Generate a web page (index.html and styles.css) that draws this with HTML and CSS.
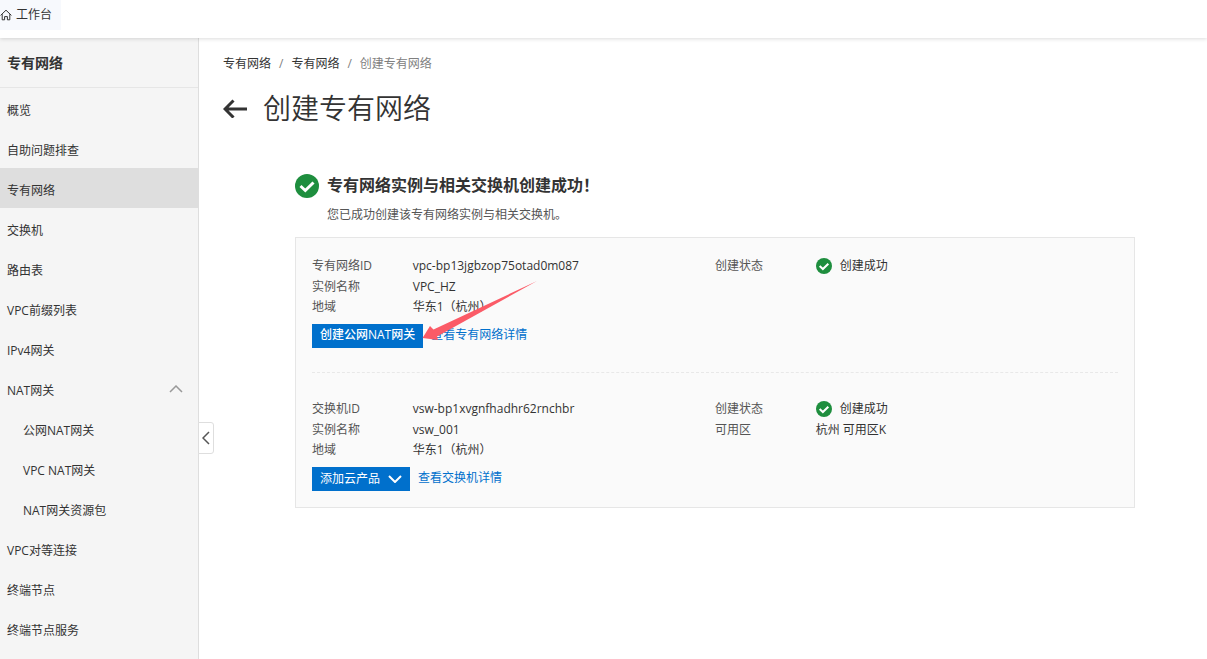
FILE: index.html
```html
<!DOCTYPE html>
<html lang="zh-CN">
<head>
    <meta charset="UTF-8">
    <meta name="viewport" content="width=device-width, initial-scale=1.0">
    <title>创建专有网络</title>
    <link rel="stylesheet" href="styles.css">
</head>
<body>

<header class="topbar">
    <a class="workbench" href="#">
        <svg class="home-icon" viewBox="0 0 12 12" aria-hidden="true">
            <path d="M0.600 6.400 L6 1.200 L11.400 6.400 M2.200 5.200 V10.800 H4.600 V7.600 H7.400 V10.800 H9.800 V5.200"/>
        </svg>
        工作台
    </a>
</header>

<div class="layout">
    <!-- 侧边导航 -->
    <aside class="sidebar">
        <h2 class="sidebar-title">专有网络</h2>
        <nav class="menu">
            <a href="#">概览</a>
            <a href="#">自助问题排查</a>
            <a class="active" href="#">专有网络</a>
            <a href="#">交换机</a>
            <a href="#">路由表</a>
            <a href="#">VPC前缀列表</a>
            <a href="#">IPv4网关</a>
            <a class="parent" href="#">NAT网关
                <svg class="fold-icon" viewBox="0 0 14 8" aria-hidden="true"><path d="M1 7 L7 1 L13 7"/></svg>
            </a>
            <a class="sub" href="#">公网NAT网关</a>
            <a class="sub" href="#">VPC NAT网关</a>
            <a class="sub" href="#">NAT网关资源包</a>
            <a href="#">VPC对等连接</a>
            <a href="#">终端节点</a>
            <a href="#">终端节点服务</a>
        </nav>
        <button type="button" class="collapse-btn" aria-label="收起">
            <svg viewBox="0 0 8 14" aria-hidden="true"><path d="M7 1 L1 7 L7 13"/></svg>
        </button>
    </aside>

    <main class="main">
        <nav class="breadcrumb">
            <a href="#">专有网络</a>
            <span class="slash">/</span>
            <a href="#">专有网络</a>
            <span class="slash">/</span>
            <span class="current">创建专有网络</span>
        </nav>

        <div class="page-head">
            <a class="back" href="#" aria-label="返回">
                <svg viewBox="0 0 24 20" aria-hidden="true"><path d="M24 11 H2 M10.500 2.500 L2 11 L10.500 19.500"/></svg>
            </a>
            <h1>创建专有网络</h1>
        </div>

        <section class="result">
            <div class="message">
                <svg class="ok-icon large" viewBox="0 0 24 24" aria-hidden="true">
                    <circle cx="12" cy="12" r="12"/>
                    <path d="M5.500 12 L10.300 16.500 L18.500 8.500"/>
                </svg>
                <div>
                    <h3>专有网络实例与相关交换机创建成功！</h3>
                    <p>您已成功创建该专有网络实例与相关交换机。</p>
                </div>
            </div>

            <div class="panel">
                <!-- 专有网络 -->
                <div class="instance">
                    <dl>
                        <div class="row">
                            <dt>专有网络ID</dt><dd>vpc-bp13jgbzop75otad0m087</dd>
                            <dt>创建状态</dt>
                            <dd class="status">
                                <svg class="ok-icon" viewBox="0 0 24 24" aria-hidden="true">
                                    <circle cx="12" cy="12" r="12"/>
                                    <path d="M5.500 12 L10.300 16.500 L18.500 8.500"/>
                                </svg>
                                创建成功
                            </dd>
                        </div>
                        <div class="row"><dt>实例名称</dt><dd>VPC_HZ</dd></div>
                        <div class="row"><dt>地域</dt><dd>华东1（杭州）</dd></div>
                    </dl>
                    <div class="actions">
                        <button type="button" class="btn strong">创建公网NAT网关</button>
                        <a href="#">查看专有网络详情</a>
                    </div>
                    <svg class="pointer" viewBox="0 0 116 60" aria-hidden="true">
                        <path d="M0.500 58 L8 46 L11.500 49.500 L115 1 L15 56.500 L16 60 Z"/>
                    </svg>
                </div>

                <!-- 交换机 -->
                <div class="instance">
                    <dl>
                        <div class="row">
                            <dt>交换机ID</dt><dd>vsw-bp1xvgnfhadhr62rnchbr</dd>
                            <dt>创建状态</dt>
                            <dd class="status">
                                <svg class="ok-icon" viewBox="0 0 24 24" aria-hidden="true">
                                    <circle cx="12" cy="12" r="12"/>
                                    <path d="M5.500 12 L10.300 16.500 L18.500 8.500"/>
                                </svg>
                                创建成功
                            </dd>
                        </div>
                        <div class="row"><dt>实例名称</dt><dd>vsw_001</dd><dt>可用区</dt><dd>杭州 可用区K</dd></div>
                        <div class="row"><dt>地域</dt><dd>华东1（杭州）</dd></div>
                    </dl>
                    <div class="actions">
                        <button type="button" class="btn">添加云产品
                            <svg viewBox="0 0 14 8" aria-hidden="true"><path d="M1 1 L7 7 L13 1"/></svg>
                        </button>
                        <a href="#">查看交换机详情</a>
                    </div>
                </div>
            </div>
        </section>
    </main>
</div>

</body>
</html>
```
FILE: styles.css
```css
* {
    box-sizing: border-box;
}
body {
    display: flex;
    flex-direction: column;
    min-height: 100vh;
    margin: 0;
    font-family: "Open Sans", "Noto Sans CJK SC", sans-serif;
    font-size: 12px;
    line-height: 20px;
    color: #333;
    background-color: #fff;
}
a {
    color: inherit;
    text-decoration: none;
}
h1, h2, h3, p, dl, dt, dd {
    margin: 0;
}
svg {
    fill: none;
    stroke: currentColor;
    flex: none;
}

/* 顶部栏 */
.topbar {
    position: relative;
    z-index: 2;
    height: 38px;
    background-color: #fff;
    box-shadow: 0 1px 4px rgba(0, 0, 0, 0.14);
}
.workbench {
    display: inline-flex;
    align-items: center;
    gap: 4px;
    height: 30px;
    padding-right: 9px;
    background-color: #f7f9fd;
}
.home-icon {
    width: 12px;
    height: 12px;
}

.layout {
    display: flex;
    flex: 1;
}

/* 侧边导航 */
.sidebar {
    position: relative;
    width: 199px;
    flex: none;
    background-color: #f5f5f5;
    border-right: 1px solid #dedede;
}
.sidebar-title {
    height: 50px;
    padding-left: 7px;
    border-bottom: 1px solid #e6e6e6;
    font-size: 14px;
    line-height: 49px;
}
.menu a {
    display: block;
    height: 40px;
    padding: 3px 0 0 7px;
    line-height: 40px;
}
.menu .active {
    background-color: #dedede;
}
.menu .sub {
    padding-left: 23px;
}
.menu .parent {
    display: flex;
    align-items: flex-start;
    justify-content: space-between;
    padding-right: 15px;
}
.fold-icon {
    width: 14px;
    height: 8px;
    margin-top: 14px;
    color: #999;
    stroke-width: 1.5;
}
.collapse-btn {
    position: absolute;
    top: 384px;
    left: 198px;
    display: flex;
    align-items: center;
    justify-content: center;
    width: 16px;
    height: 32px;
    padding: 0;
    border: 1px solid #dedede;
    border-radius: 0 3px 3px 0;
    background-color: #fff;
    color: #555;
    cursor: pointer;
}
.collapse-btn svg {
    width: 8px;
    height: 14px;
    stroke-width: 1.5;
}

/* 主体内容 */
.main {
    flex: 1;
    min-width: 0;
    padding: 16px 0 16px 24px;
}
.breadcrumb {
    display: flex;
    gap: 8px;
}
.slash, .current {
    color: #808080;
}
.page-head {
    display: flex;
    align-items: center;
    gap: 16px;
    margin-top: 14px;
}
.page-head h1 {
    font-size: 28px;
    font-weight: 350;
    line-height: 40px;
}
.back svg {
    display: block;
    width: 24px;
    height: 20px;
    stroke-width: 3;
}
.result {
    max-width: 840px;
    margin: 46px auto 0;
}
.message {
    display: flex;
    gap: 8px;
}
.message h3 {
    font-size: 16px;
    line-height: 22px;
}
.message p {
    margin-top: 9px;
    color: #555;
}
.ok-icon {
    width: 16px;
    height: 16px;
    color: #fff;
    stroke-width: 3;
}
.ok-icon circle {
    fill: #1e8e3e;
    stroke: none;
}
.ok-icon.large {
    width: 24px;
    height: 24px;
}
.panel {
    margin-top: 12px;
    padding: 16px;
    border: 1px solid #e6e6e6;
    background-color: #fafafa;
}
.instance {
    position: relative;
}
.instance + .instance {
    margin-top: 24px;
    padding-top: 24px;
    border-top: 1px dashed #e8e8e8;
}
dl {
    padding-top: 1px;
}
.row {
    display: grid;
    grid-template-columns: 1fr 3fr 1fr 3fr;
}
.row:first-child {
    line-height: 22px;
}
dt {
    color: #555;
}
.status {
    display: flex;
    align-items: center;
    gap: 8px;
}
.actions {
    display: flex;
    gap: 8px;
    margin-top: 7px;
}
.actions a {
    color: #0070cc;
    line-height: 22px;
}
.btn {
    display: flex;
    align-items: center;
    gap: 8px;
    height: 24px;
    padding: 0 8px;
    border: 0;
    background-color: #0070cc;
    color: #fff;
    font: inherit;
    cursor: pointer;
}
.btn.strong {
    font-weight: 500;
    line-height: 22px;
    align-items: flex-start;
}
.btn svg {
    width: 14px;
    height: 8px;
    stroke-width: 2;
}
/* 指向按钮的红色箭头 */
.pointer {
    position: absolute;
    top: 26px;
    left: 110px;
    width: 116px;
    height: 60px;
}
.pointer path {
    fill: #fb5b67;
    stroke: none;
}
```
